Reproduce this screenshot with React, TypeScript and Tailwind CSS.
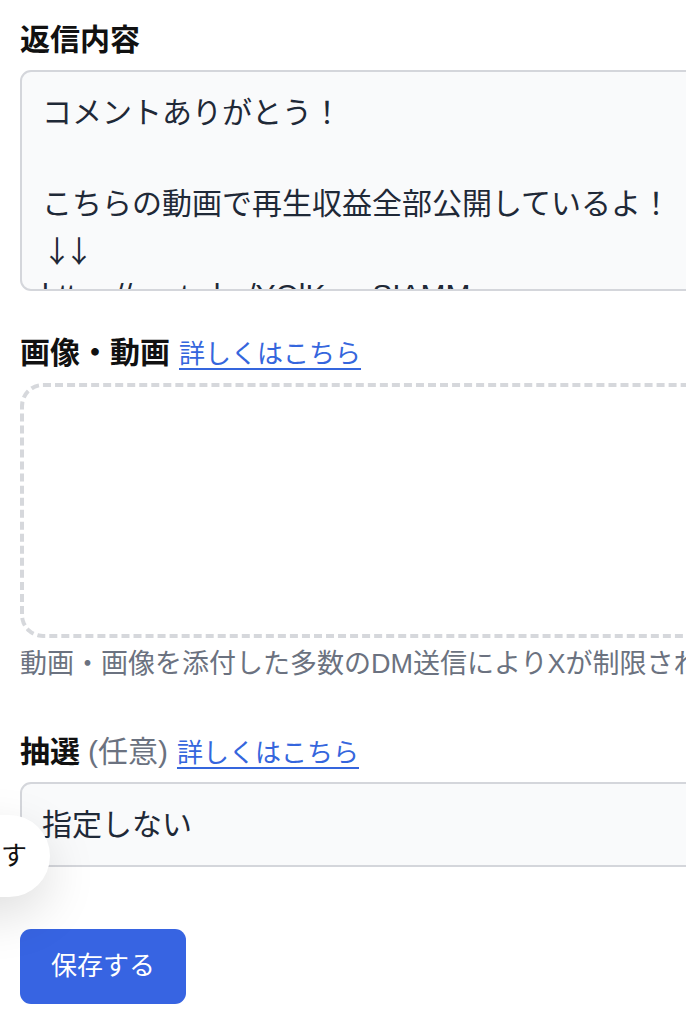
import React from 'react';

const FONT = { fontFamily: '"Liberation Sans", "Noto Sans CJK JP", sans-serif' };

function Label({ children }: { children: React.ReactNode }) {
  return (
    <div className="flex items-baseline gap-[9px] text-[30px] leading-[45px] text-[#111]">
      {children}
    </div>
  );
}

function MoreLink() {
  return (
    <a href="#" className="text-[26px] leading-[37px] text-[#3566dd] underline underline-offset-[5px] decoration-[2px]">
      詳しくはこちら
    </a>
  );
}

export default function App() {
  const lines = [
    'コメントありがとう！',
    '',
    'こちらの動画で再生収益全部公開しているよ！',
    '↓↓',
    'https://youtu.be/YOlKyuvSIAMM',
  ];

  return (
    <div className="relative w-[686px] min-h-[1024px] overflow-hidden bg-white" style={FONT}>
      <div className="w-[760px] pl-[20px] pt-[17px] pb-[19px]">
        <Label><span className="font-bold">返信内容</span></Label>

        <div className="mt-2 h-[221px] overflow-hidden rounded-[11px] border-2 border-[#d4d6db] bg-[#f9fafb] px-[20px] pt-[18px] text-[30px] leading-[45.5px] text-[#1f2937]">
          {lines.map((l, i) => (
            <div
              key={i}
              className={`h-[45.5px] whitespace-nowrap ${l === '↓↓' ? "font-['Noto_Sans_CJK_JP'] tracking-[-8px]" : ''}`}
            >
              {l}
            </div>
          ))}
        </div>

        <div className="mt-[39px]">
          <Label>
            <span className="font-bold">画像・動画</span>
            <MoreLink />
          </Label>
        </div>

        <div className="mt-2 h-[255px] rounded-[23px] border-[4px] border-dashed border-[#d6d8dc]" />

        <p className="mt-2 whitespace-nowrap text-[27px] leading-[37px] text-[#6b7280]">
          動画・画像を添付した多数のDM送信によりXが制限されることがあります
        </p>

        <div className="mt-[46px]">
          <Label>
            <span className="font-bold">抽選</span>
            <span className="-ml-[1px] text-[#6b7280]">(任意)</span>
            <MoreLink />
          </Label>
        </div>

        <div className="mt-2 flex h-[85px] items-center rounded-[11px] border-2 border-[#d4d6db] bg-[#f9fafb] px-[20px] text-[30px] text-[#1f2937]">
          指定しない
        </div>

        <button className="mt-[62px] flex h-[75px] w-[166px] items-center justify-center rounded-[11px] bg-[#3764e2] text-[26px] text-white">
          保存する
        </button>
      </div>

      {/* floating side button, mostly offscreen */}
      <div className="absolute left-[-110px] top-[815px] flex h-[82px] w-[160px] items-center justify-end rounded-full bg-white pr-[23px] text-[26px] text-[#111] shadow-[0_18px_50px_rgba(0,0,0,0.13)]">
        す
      </div>
    </div>
  );
}
